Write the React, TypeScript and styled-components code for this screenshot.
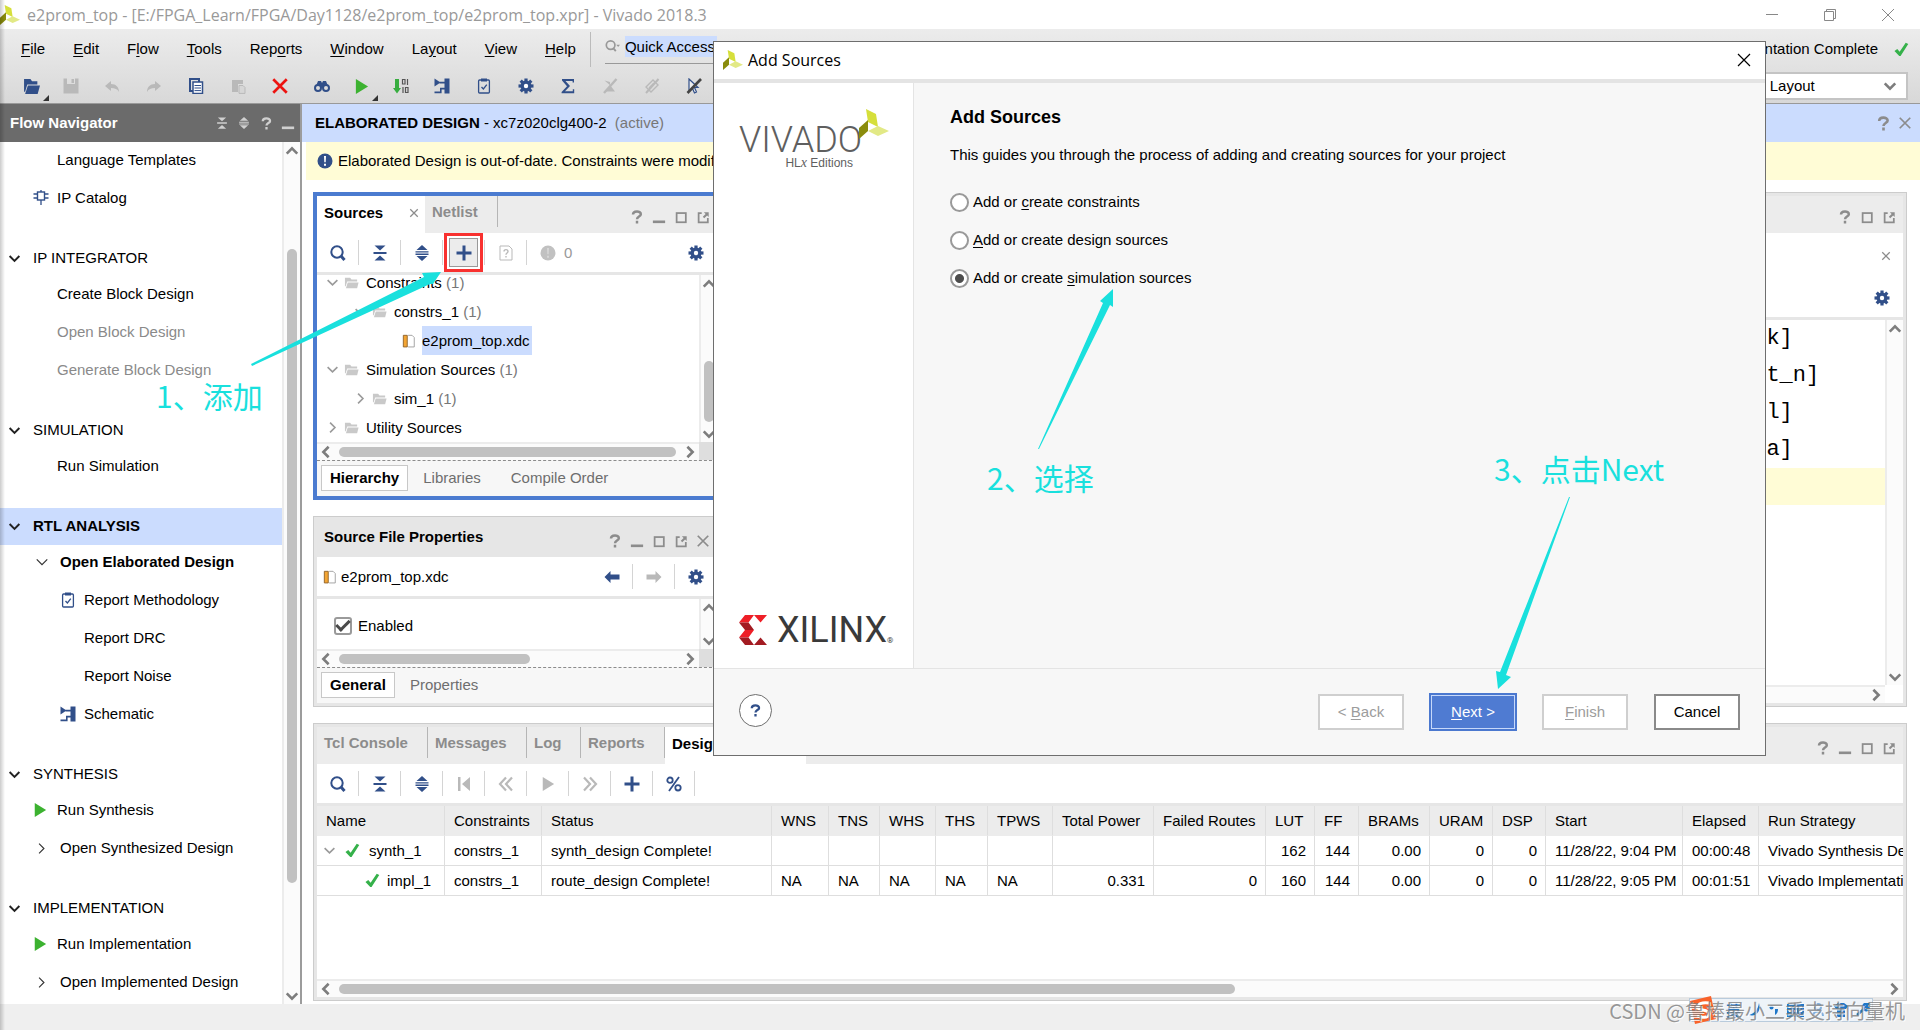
import React from 'react';
import styled, { createGlobalStyle, css } from 'styled-components';

const NAVY = '#314f89';
const GREY = '#8c8c8c';
const PALE = '#b9b9b9';
const GREEN = '#3cb230';
const SELECT_BLUE = '#cbdcfe';
const CYAN = '#19e0dd';

const GlobalStyle = createGlobalStyle`
  * { box-sizing: border-box; }
  body { margin: 0; background: #fff; overflow: hidden; }
  body, button, input, select, table {
    font-family: "Liberation Sans", Arial, sans-serif;
    font-size: 15px;
    line-height: 18px;
    color: #000;
  }
  button, input, select { border: 0; padding: 0; margin: 0; background: none; }
  h1, h2, p, ul { margin: 0; padding: 0; font-size: inherit; }
  ul { list-style: none; }
  svg { display: block; flex: none; }
  u { text-underline-offset: 2px; }
  a { color: inherit; text-decoration: none; }
`;

/* ---------- icons ---------- */

type IconProps = { color?: string; size?: number };

const Svg = ({ size = 16, children }: { size?: number; children: React.ReactNode }) => (
  <svg width={size} height={size} viewBox="0 0 16 16" aria-hidden="true">{children}</svg>
);

const VivadoMark = ({ size = 20 }: IconProps) => (
  <svg width={size} height={size} viewBox="0 0 30 30" aria-hidden="true">
    <path d="M7 0 L17 5 L19 18 L9 13 Z" fill="#d6df3b" />
    <path d="M0 19 L9 11 L9 22 L0 30 Z" fill="#8a8c0c" />
    <path d="M9 22 L19 17 L30 22 L19 27 Z" fill="#e2e986" />
  </svg>
);

const Chevron = ({ dir, color = '#7d7d7d', w = 2, size = 14 }: { dir: 'up' | 'down' | 'left' | 'right'; color?: string; w?: number; size?: number }) => {
  const d = { up: 'M2 11 L8 5 L14 11', down: 'M2 5 L8 11 L14 5', left: 'M11 2 L5 8 L11 14', right: 'M5 2 L11 8 L5 14' }[dir];
  return <Svg size={size}><path d={d} fill="none" stroke={color} strokeWidth={w} /></Svg>;
};

const Search = ({ color = NAVY }: IconProps) => (
  <Svg><circle cx="7" cy="7" r="5.7" fill="none" stroke={color} strokeWidth="2" /><path d="M11 11 L14.5 15" stroke={color} strokeWidth="3" /></Svg>
);
const Collapse = ({ color = NAVY, size }: IconProps) => (
  <Svg size={size}><path d="M2.5 0.5 H13.5 L8 5.5Z M2.5 15.5 H13.5 L8 10.5Z M1.5 7 H14.5 V9 H1.5Z" fill={color} /></Svg>
);
const Expand = ({ color = NAVY, size }: IconProps) => (
  <Svg size={size}><path d="M2.5 5 H13.5 L8 0Z M2.5 11 H13.5 L8 16Z M1.5 6.2 H14.5 V7.6 H1.5Z M1.5 8.6 H14.5 V10 H1.5Z" fill={color} /></Svg>
);
const Plus = () => <Svg><path d="M6.5 0.5 H9.5 V6.5 H15.5 V9.5 H9.5 V15.5 H6.5 V9.5 H0.5 V6.5 H6.5Z" fill={NAVY} /></Svg>;
const DocHelp = () => (
  <Svg><path d="M2 1 H11 L14 4 V15 H2Z" fill="none" stroke={PALE} /><path d="M6 6.5 C6 4 10 4 10 6.5 C10 8 8 8 8 9.7 M8 11 V12.6" fill="none" stroke={PALE} strokeWidth="1.4" /></Svg>
);
const AlertDot = ({ color = '#c1c1c1' }: IconProps) => (
  <Svg><circle cx="8" cy="8" r="7.5" fill={color} /><path d="M7 3 H9 L8.7 9.3 H7.3Z M7 10.8 H9 V12.8 H7Z" fill="#fff" opacity={color === NAVY ? 1 : 0.35} /></Svg>
);
const Gear = () => (
  <Svg>
    <g fill={NAVY}>
      {[0, 45, 90, 135].map((a) => <rect key={a} x="6.4" y="0.5" width="3.2" height="15" transform={`rotate(${a} 8 8)`} />)}
      <circle cx="8" cy="8" r="5.5" />
    </g>
    <circle cx="8" cy="8" r="2.2" fill="#fff" />
  </Svg>
);
const Help = ({ color = GREY, size = 14 }: IconProps) => (
  <Svg size={size}><path d="M3.4 5.2 C3.4 0.6 12.4 0.6 12.4 4.8 C12.4 7.6 8 7.4 8 10.6 M8 12.2 V15.4" fill="none" stroke={color} strokeWidth="2.8" /></Svg>
);
const Minimize = ({ color = GREY }: IconProps) => <Svg size={14}><path d="M1 13.5 H15" stroke={color} strokeWidth="3" /></Svg>;
const Maximize = () => <Svg size={14}><rect x="3" y="3.5" width="10.5" height="10.5" fill="none" stroke={GREY} strokeWidth="2" /></Svg>;
const Popout = () => (
  <Svg size={14}><path d="M6.5 3.5 H3 V14 H13.5 V9" fill="none" stroke={GREY} strokeWidth="2" /><path d="M9 2.5 H14.5 V8 L12.7 6.2 L9.4 9.4 L7.8 7.8 L11 4.5Z" fill={GREY} /></Svg>
);
const Cross = ({ color = GREY, size = 14, w = 2 }: IconProps & { w?: number }) => (
  <Svg size={size}><path d="M2 2 L14 14 M14 2 L2 14" stroke={color} strokeWidth={w} /></Svg>
);
const Play = ({ color = GREEN, size = 14 }: IconProps) => <Svg size={size}><path d="M2 0 L15 8 L2 16Z" fill={color} /></Svg>;
const Check = () => <Svg size={15}><path d="M0.5 9.5 L3.5 7.5 L6 10.5 L12.5 0.8 L15.2 2.2 L7 15 L5.6 15Z" fill="#35b14a" /></Svg>;
const Clipboard = () => (
  <Svg><rect x="2.6" y="2" width="10.8" height="13" rx="1" fill="none" stroke={NAVY} strokeWidth="1.3" /><path d="M5 0.5 H11 V3.5 H5Z" fill={NAVY} /><path d="M5.5 9 L7.4 11 L10.8 6.6" fill="none" stroke={NAVY} strokeWidth="1.3" /></Svg>
);
const Schematic = () => (
  <Svg><path d="M10.5 0.5 H15.5 V15.5 H10.5Z M0.5 0.5 L6.5 4.6 L0.5 8.5Z" fill={NAVY} /><path d="M5.5 4.6 H11 M0.5 14.4 H6.8 V10.6 H11" fill="none" stroke={NAVY} strokeWidth="1.6" /></Svg>
);
const Chip = () => (
  <Svg><rect x="4.5" y="2" width="7" height="8" fill="none" stroke={NAVY} strokeWidth="1.4" /><path d="M8 0 V2 M8 10 V15 M0.5 4 H4 M0.5 8 H4 M12 4 H15.5 M12 8 H15.5" stroke={NAVY} strokeWidth="1.3" /></Svg>
);
const FolderIcon = () => (
  <Svg size={15}><path d="M1 3 H6.5 L8 4.8 H14 V7 H3.4 L1.8 12 H1Z" fill="#c9c9c9" /><path d="M4 8 H15.5 L14 14 H2Z" fill="#c9c9c9" /></Svg>
);
const XdcIcon = () => (
  <Svg size={14}><path d="M1.5 1.5 H6 V14.8 H1.5Z" fill="#f3a533" stroke="#8a5d24" /><path d="M7 1.5 H11.5 L14 4 V14.8 H7" fill="#fff" stroke="#9a9a9a" /></Svg>
);
const OpenIcon = () => (
  <Svg size={17}><path d="M1 1 H7 L8.5 3 H13.5 V6 H4 L2 13 H1Z" fill={NAVY} /><path d="M4.6 7 H16 L13.8 15 H2Z" fill={NAVY} /></Svg>
);
const Save = () => <Svg><path d="M0.5 0.5 H15.5 V15.5 H0.5Z M4 0.5 V6 H12 V0.5Z" fill={PALE} fillRule="evenodd" /><path d="M8.5 1 H11 V5 H8.5Z" fill={PALE} /></Svg>;
const Undo = () => <Svg><path d="M1 8 L7 3 V6 C12 6 15 9 15 14 C13.5 11 11 10 7 10 V13Z" fill={PALE} /></Svg>;
const Redo = () => <Svg><path d="M15 8 L9 3 V6 C4 6 1 9 1 14 C2.5 11 5 10 9 10 V13Z" fill={PALE} /></Svg>;
const CopyIcon = () => <Svg><path d="M2 1 H11 V13 H2Z" fill="none" stroke={NAVY} strokeWidth="2" /><path d="M5 4 H14.5 V15.5 H5Z" fill="#fff" stroke={NAVY} strokeWidth="1.5" /><path d="M6.5 7.5 H13 M6.5 10 H13 M6.5 12.6 H13" stroke={NAVY} /></Svg>;
const Paste = () => <Svg><path d="M2 2 H13 V6 H8 V14 H2Z" fill={PALE} /><path d="M9 7.5 H13 L15 9.5 V15.4 H9Z" fill="#d6d6d6" stroke={PALE} /></Svg>;
const Binoculars = () => (
  <Svg><circle cx="4" cy="10" r="3" fill="none" stroke={NAVY} strokeWidth="2" /><circle cx="12" cy="10" r="3" fill="none" stroke={NAVY} strokeWidth="2" /><path d="M2 8 L4 3 H7 L8 5 L9 3 H12 L14 8 L10 7.5 L9 10 H7 L6 7.5Z" fill={NAVY} /></Svg>
);
const Bits = () => (
  <Svg><path d="M2 1 H6 V10 H8 L4 15.5 L0 10 H2Z" fill="#37ad3f" /><path d="M9.5 1.5 H12 V6 H9.5Z M14.5 1 V7 M10 9 V15 M12.5 9.5 H15 V14.5 H12.5Z" fill="none" stroke="#555" strokeWidth="1.2" /></Svg>
);
const Sigma = () => <Svg><path d="M2 1 H14 V4.5 H12.6 V3 H5.5 L10 8 L5 13.2 H12.8 V11.2 H14.2 V15.2 H1.6 V14 L7 8.2 L2 2.4Z" fill={NAVY} /></Svg>;
const Slashed = ({ color = PALE }: IconProps) => (
  <Svg><path d="M2.5 2.5 L9 8 L3 13.5 H13 L8 7 V4Z" fill={color} /><path d="M14.5 1 L2 15" stroke={color} strokeWidth="2.4" /></Svg>
);
const SlashedProbe = () => (
  <Svg><path d="M2 9 L9 2 L14 7 L7 14Z M5 10 L10 5" fill="none" stroke={PALE} strokeWidth="1.4" /><path d="M14.5 1 L2 15" stroke={PALE} strokeWidth="2" /></Svg>
);
const SlashedCursor = () => (
  <Svg><path d="M3 1 L12 9.5 H8.5 L10.5 14 L8.5 15 L6.5 10.5 L3 13Z" fill="#eee" stroke={NAVY} strokeWidth="1.2" /><path d="M15 1 L1.5 15" stroke="#444" strokeWidth="2.6" /></Svg>
);
const ArrowBlock = ({ flip, color }: { flip?: boolean; color: string }) => (
  <Svg><path d={flip ? 'M15.5 8 L9.5 2 V5.5 H0.5 V10.5 H9.5 V14Z' : 'M0.5 8 L6.5 2 V5.5 H15.5 V10.5 H6.5 V14Z'} fill={color} /></Svg>
);
const SkipStart = () => <Svg><path d="M2 1 H4.5 V15 H2Z M14 1 V15 L6 8Z" fill={PALE} /></Svg>;
const Rewind = () => <Svg><path d="M8 1.5 L2 8 L8 14.5 M14 1.5 L8 8 L14 14.5" fill="none" stroke={PALE} strokeWidth="2.2" /></Svg>;
const FastFwd = () => <Svg><path d="M2 1.5 L8 8 L2 14.5 M8 1.5 L14 8 L8 14.5" fill="none" stroke={PALE} strokeWidth="2.2" /></Svg>;
const Percent = () => <Svg><circle cx="4" cy="4.2" r="2.7" fill="none" stroke={NAVY} strokeWidth="1.8" /><circle cx="12" cy="11.8" r="2.7" fill="none" stroke={NAVY} strokeWidth="1.8" /><path d="M13 1 L3 15" stroke={NAVY} strokeWidth="1.8" /></Svg>;

/* ---------- shared parts ---------- */

const IconButton = styled.button<{ $w?: number; $h?: number }>`
  position: relative;
  display: flex;
  align-items: center;
  justify-content: center;
  flex: none;
  width: ${(p) => p.$w ?? 22}px;
  height: ${(p) => p.$h ?? 22}px;
`;

const BarWrap = styled.div<{ $vertical?: boolean }>`
  display: flex;
  flex: none;
  background: #fbfbfb;
  ${(p) => p.$vertical
    ? css`flex-direction: column; width: 18px; border-left: 2px solid #ececec;`
    : css`flex-direction: row; height: 18px; border-top: 2px solid #ececec;`}
`;
const BarTrack = styled.div<{ $vertical?: boolean }>`
  display: flex;
  flex: 1;
  min-width: 0;
  min-height: 0;
  flex-direction: ${(p) => (p.$vertical ? 'column' : 'row')};
  align-items: center;
`;
const BarSpace = styled.div<{ $grow: number }>`flex: ${(p) => p.$grow} 1 0;`;
const BarThumb = styled.div<{ $grow: number; $vertical?: boolean }>`
  flex: ${(p) => p.$grow} 1 0;
  border-radius: 5px;
  background: #c1c1c1;
  ${(p) => (p.$vertical ? css`width: 10px;` : css`height: 10px;`)}
`;

type ScrollProps = { vertical?: boolean; before?: number; thumb?: number; after?: number };
const ScrollBar = ({ vertical, before = 0, thumb = 0, after = 0 }: ScrollProps) => (
  <BarWrap $vertical={vertical}>
    <IconButton aria-label="Scroll back" $w={vertical ? 16 : 18} $h={vertical ? 18 : 16}>
      <Chevron dir={vertical ? 'up' : 'left'} w={3} />
    </IconButton>
    <BarTrack $vertical={vertical}>
      <BarSpace $grow={before} />
      {thumb > 0 && <BarThumb $grow={thumb} $vertical={vertical} />}
      <BarSpace $grow={after} />
    </BarTrack>
    <IconButton aria-label="Scroll forward" $w={vertical ? 16 : 18} $h={16}>
      <Chevron dir={vertical ? 'down' : 'right'} w={3} />
    </IconButton>
  </BarWrap>
);

/* ---------- window frame ---------- */

const Window = styled.div`
  position: relative;
  display: flex;
  flex-direction: column;
  height: 100vh;
  overflow: hidden;
  &::after {
    content: '';
    position: absolute;
    inset: 0 auto 0 0;
    width: 5px;
    background: linear-gradient(90deg, rgba(0, 0, 0, 0.2), rgba(0, 0, 0, 0));
    pointer-events: none;
  }
`;
const TitleBar = styled.header`
  display: flex;
  align-items: center;
  height: 29px;
  flex: none;
  gap: 7px;
  padding-right: 24px;
  color: #999;
  font-family: "Open Sans", "Noto Sans", sans-serif;
  font-size: 16px;
`;
const TitleText = styled.h1`
  flex: 1;
  font-weight: 400;
  line-height: 24px;
`;
const WindowButtons = styled.div`
  display: flex;
  gap: 42px;
`;
const Chrome = styled.div`
  flex: none;
  height: 75px;
  background: linear-gradient(#ececec, #d8d8d8);
  border-bottom: 1px solid #999;
`;
const MenuRow = styled.div`
  display: flex;
  height: 40px;
  align-items: center;
  padding: 0 11px 0 21px;
`;
const Menus = styled.nav`
  display: flex;
  gap: 28px;
`;
const QuickAccess = styled.label`
  display: flex;
  align-items: center;
  align-self: stretch;
  margin: 3px 0 2px 14px;
  padding-left: 14px;
  border-left: 1px solid #bbb;
`;
const QuickBox = styled.span`
  display: flex;
  align-items: center;
  gap: 5px;
  height: 29px;
  border-bottom: 1px solid #999;
  padding-bottom: 6px;
`;
const QuickInput = styled.input`
  width: 160px;
  height: 21px;
  background: linear-gradient(90deg, ${SELECT_BLUE} 92px, transparent 92px);
  &::placeholder { color: #000; opacity: 1; }
`;
const RunState = styled.div`
  display: flex;
  align-items: center;
  gap: 16px;
  margin-left: auto;
`;
const ToolRow = styled.div`
  display: flex;
  align-items: center;
  height: 34px;
  padding: 0 12px 0 11px;
`;
const Corner = styled.span`
  position: absolute;
  right: 2px;
  bottom: -4px;
  border: 3px solid #333;
  border-top-color: transparent;
  border-left-color: transparent;
`;
const LayoutPicker = styled.span`
  position: relative;
  display: flex;
  align-items: center;
  margin-left: auto;
  margin-top: -1px;
  width: 204px;
  height: 28px;
  border: 2px solid #c4c4c4;
  background: #fff;
  > svg { position: absolute; right: 9px; pointer-events: none; }
`;
const LayoutSelect = styled.select`
  appearance: none;
  width: 100%;
  height: 100%;
  padding-left: 12px;
`;

const Body = styled.div`
  display: flex;
  flex: 1;
  min-height: 0;
`;
const StatusBar = styled.footer`
  flex: none;
  height: 26px;
  background: #efefef;
`;

/* ---------- flow navigator ---------- */

const Nav = styled.aside`
  display: flex;
  flex-direction: column;
  flex: none;
  width: 302px;
  border-right: 2px solid #9c9c9c;
`;
const NavHead = styled.div`
  display: flex;
  align-items: center;
  height: 38px;
  flex: none;
  padding: 0 1px 0 10px;
  background: #6b6b6b;
  color: #fff;
`;
const NavTitle = styled.h2`flex: 1;`;
const NavScroll = styled.div`
  display: flex;
  flex: 1;
  min-height: 0;
`;
const NavList = styled.div`
  flex: 1;
  padding-top: 1px;
  overflow: hidden;
`;
const Section = styled.section`
  padding-bottom: 21px;
`;
const SectionHead = styled.h2<{ $active?: boolean }>`
  display: flex;
  align-items: center;
  gap: 12px;
  height: 37px;
  padding: 0 0 1px 8px;
  font-weight: ${(p) => (p.$active ? 700 : 400)};
  background: ${(p) => (p.$active ? SELECT_BLUE : 'transparent')};
`;
const NavItem = styled.a<{ $indent: number; $bold?: boolean; $dim?: boolean }>`
  display: flex;
  align-items: center;
  height: 38px;
  padding: 0 0 4px ${(p) => p.$indent}px;
  font-weight: ${(p) => (p.$bold ? 700 : 400)};
  color: ${(p) => (p.$dim ? '#8a8a8a' : '#000')};
`;
const Glyph = styled.span<{ $w: number }>`
  display: flex;
  width: ${(p) => p.$w}px;
  flex: none;
`;

type NavEntry = { text: string; icon?: React.ReactNode; level?: 0 | 1 | 2; bold?: boolean; dim?: boolean };
const levels = { 0: [33, 24], 1: [35, 25], 2: [60, 24] } as const;

const NavEntryRow = ({ text, icon, level = 0, bold, dim }: NavEntry) => (
  <NavItem href="#" $indent={levels[level][0]} $bold={bold} $dim={dim}>
    <Glyph $w={levels[level][1]}>{icon}</Glyph>
    {text}
  </NavItem>
);

const navSections: { title: string; active?: boolean; items: NavEntry[] }[] = [
  { title: 'IP INTEGRATOR', items: [{ text: 'Create Block Design' }, { text: 'Open Block Design', dim: true }, { text: 'Generate Block Design', dim: true }] },
  { title: 'SIMULATION', items: [{ text: 'Run Simulation' }] },
  {
    title: 'RTL ANALYSIS',
    active: true,
    items: [
      { text: 'Open Elaborated Design', level: 1, bold: true, icon: <Chevron dir="down" color="#333" w={1.4} /> },
      { text: 'Report Methodology', level: 2, icon: <Clipboard /> },
      { text: 'Report DRC', level: 2 },
      { text: 'Report Noise', level: 2 },
      { text: 'Schematic', level: 2, icon: <Schematic /> },
    ],
  },
  { title: 'SYNTHESIS', items: [{ text: 'Run Synthesis', icon: <Play /> }, { text: 'Open Synthesized Design', level: 1, icon: <Chevron dir="right" color="#333" w={1.4} size={13} /> }] },
  { title: 'IMPLEMENTATION', items: [{ text: 'Run Implementation', icon: <Play /> }, { text: 'Open Implemented Design', level: 1, icon: <Chevron dir="right" color="#333" w={1.4} size={13} /> }] },
];

const FlowNavigator = () => (
  <Nav>
    <NavHead>
      <NavTitle>Flow Navigator</NavTitle>
      <IconButton aria-label="Collapse all"><Collapse color="#d0d0d0" size={12} /></IconButton>
      <IconButton aria-label="Expand all"><Expand color="#d0d0d0" size={12} /></IconButton>
      <IconButton aria-label="Help"><Help color="#d0d0d0" size={13} /></IconButton>
      <IconButton aria-label="Minimize"><Minimize color="#d0d0d0" /></IconButton>
    </NavHead>
    <NavScroll>
      <NavList>
        <Section>
          <NavEntryRow text="Language Templates" />
          <NavEntryRow text="IP Catalog" icon={<Chip />} />
        </Section>
        {navSections.map((s) => (
          <Section key={s.title}>
            <SectionHead $active={s.active}><Chevron dir="down" color="#222" w={2.4} size={13} />{s.title}</SectionHead>
            {s.items.map((i) => <NavEntryRow key={i.text} {...i} />)}
          </Section>
        ))}
      </NavList>
      <ScrollBar vertical before={89} thumb={634} after={105} />
    </NavScroll>
  </Nav>
);

/* ---------- main area ---------- */

const Main = styled.main`
  display: flex;
  flex-direction: column;
  flex: 1;
  min-width: 0;
`;
const DesignBar = styled.div`
  display: flex;
  align-items: center;
  flex: none;
  height: 38px;
  padding: 0 4px 0 13px;
  background: ${SELECT_BLUE};
`;
const DesignTitle = styled.h2`
  flex: 1;
  font-weight: 400;
  white-space: pre;
`;
const Muted = styled.span`color: #777;`;
const Notice = styled.p`
  display: flex;
  align-items: center;
  flex: none;
  gap: 5px;
  height: 38px;
  margin-left: 4px;
  padding-left: 11px;
  background: #fffcd6;
`;
const Workspace = styled.div`
  display: flex;
  flex-direction: column;
  flex: 1;
  gap: 16px;
  min-height: 0;
  padding: 12px 13px 3px 11px;
`;
const TopPanels = styled.div`
  display: grid;
  grid-template-columns: 408px 1fr;
  gap: 16px;
  flex: none;
`;
const LeftColumn = styled.div`
  display: flex;
  flex-direction: column;
  gap: 16px;
`;
const Panel = styled.section<{ $focus?: boolean; $grow?: boolean }>`
  display: flex;
  flex-direction: column;
  min-width: 0;
  ${(p) => p.$grow && css`flex: 1; min-height: 0;`}
  ${(p) => p.$focus
    ? css`border: 4px solid #4b7bd0;`
    : css`border: 1px solid #ccc; box-shadow: inset 0 0 0 3px #e6e6e6; padding: 3px;`}
  background: #fff;
`;
const PanelHead = styled.div<{ $dark?: boolean }>`
  display: flex;
  align-items: flex-start;
  flex: none;
  height: 37px;
  background: ${(p) => (p.$dark ? '#e6e6e6' : '#ececec')};
`;
const PanelTitle = styled.h2`
  padding: 8px 7px;
`;
const PanelTools = styled.div`
  display: flex;
  margin-left: auto;
  padding: 10px 3px 0 0;
`;
const Tab = styled.button<{ $active?: boolean; $w: number }>`
  display: flex;
  align-items: center;
  justify-content: space-between;
  width: ${(p) => p.$w}px;
  height: ${(p) => (p.$active ? 37 : 31)}px;
  padding: 0 6px ${(p) => (p.$active ? 3 : 0)}px 7px;
  font-weight: 700;
  color: ${(p) => (p.$active ? '#000' : GREY)};
  background: ${(p) => (p.$active ? '#fff' : 'transparent')};
  border-right: ${(p) => (p.$active ? 0 : 1)}px solid #b5b5b5;
`;
const Toolbar = styled.div`
  display: flex;
  align-items: center;
  flex: none;
  height: 42px;
  border-bottom: 3px solid #e6e6e6;
`;
const ToolCell = styled.div<{ $last?: boolean }>`
  display: flex;
  align-items: center;
  justify-content: center;
  width: 42px;
  height: 25px;
  border-right: ${(p) => (p.$last ? 0 : 1)}px solid #d4d4d4;
`;
const Push = styled.span`margin-left: auto;`;
const AddButton = styled(IconButton)`
  width: 29px;
  height: 29px;
  background: #ececec;
  border: 1px solid #999;
  outline: 3px solid #f8312f;
  outline-offset: 2px;
`;
const CountCell = styled.div`
  display: flex;
  align-items: center;
  gap: 8px;
  padding-left: 13px;
  color: #999;
`;
const ScrollArea = styled.div`
  display: grid;
  grid-template-columns: minmax(0, 1fr) 18px;
  grid-template-rows: minmax(0, 1fr) 18px;
`;
const ScrollCorner = styled.div<{ $plain?: boolean }>`
  background: ${(p) => (p.$plain ? '#fff' : '#dedede')};
`;
const Tree = styled.ul`
  overflow: hidden;
`;
const TreeRow = styled.li<{ $level: number }>`
  display: flex;
  align-items: center;
  height: 29px;
  padding-left: ${(p) => 9 + p.$level * 28}px;
  white-space: pre;
  &:first-child { height: 22px; padding-bottom: 7px; }
`;
const TreeLabel = styled.span<{ $selected?: boolean }>`
  line-height: 29px;
  padding-right: 2px;
  background: ${(p) => (p.$selected ? SELECT_BLUE : 'transparent')};
`;
const FootTabs = styled.div`
  display: flex;
  align-items: center;
  flex: none;
  height: 36px;
  padding: 0 4px 1px;
  border-top: 1px dashed #8c8c8c;
  background: #f7f7f7;
`;
const FootTab = styled.button<{ $active?: boolean }>`
  height: 26px;
  padding: 0 8px;
  font-weight: ${(p) => (p.$active ? 700 : 400)};
  color: ${(p) => (p.$active ? '#000' : '#6e6e6e')};
  border: 1px solid ${(p) => (p.$active ? '#c8c8c8' : 'transparent')};
  background: ${(p) => (p.$active ? '#fff' : 'transparent')};
  margin-right: ${(p) => (p.$active ? 6 : 12)}px;
`;

const tree: { level: number; text: string; count?: string; open?: boolean; file?: boolean }[] = [
  { level: 0, text: 'Constraints', count: ' (1)', open: true },
  { level: 1, text: 'constrs_1', count: ' (1)', open: true },
  { level: 2, text: 'e2prom_top.xdc', file: true },
  { level: 0, text: 'Simulation Sources', count: ' (1)', open: true },
  { level: 1, text: 'sim_1', count: ' (1)' },
  { level: 0, text: 'Utility Sources' },
];

const SourcesPanel = () => (
  <Panel $focus>
    <PanelHead>
      <Tab $active $w={108}>Sources<Cross size={10} w={2} /></Tab>
      <Tab $w={73}>Netlist</Tab>
      <PanelTools>
        <IconButton aria-label="Help"><Help /></IconButton>
        <IconButton aria-label="Minimize"><Minimize /></IconButton>
        <IconButton aria-label="Maximize"><Maximize /></IconButton>
        <IconButton aria-label="Float"><Popout /></IconButton>
      </PanelTools>
    </PanelHead>
    <Toolbar>
      <ToolCell><IconButton aria-label="Search"><Search /></IconButton></ToolCell>
      <ToolCell><IconButton aria-label="Collapse all"><Collapse /></IconButton></ToolCell>
      <ToolCell><IconButton aria-label="Expand all"><Expand /></IconButton></ToolCell>
      <ToolCell><AddButton aria-label="Add sources"><Plus /></AddButton></ToolCell>
      <ToolCell><IconButton aria-label="Missing files"><DocHelp /></IconButton></ToolCell>
      <CountCell><AlertDot />0</CountCell>
      <Push />
      <ToolCell $last><IconButton aria-label="Settings"><Gear /></IconButton></ToolCell>
    </Toolbar>
    <ScrollArea>
      <Tree>
        {tree.map((n) => (
          <TreeRow key={n.text} $level={n.level}>
            <Glyph $w={n.file ? 20 : 18}>
              {n.file ? null : <Chevron dir={n.open ? 'down' : 'right'} color="#9a9a9a" size={13} />}
            </Glyph>
            <Glyph $w={n.file ? 20 : 22}>{n.file ? <XdcIcon /> : <FolderIcon />}</Glyph>
            <TreeLabel $selected={n.file}>{n.text}{n.count && <Muted>{n.count}</Muted>}</TreeLabel>
          </TreeRow>
        ))}
      </Tree>
      <ScrollBar vertical before={67} thumb={61} after={4} />
      <ScrollBar before={4} thumb={337} after={5} />
      <ScrollCorner />
    </ScrollArea>
    <FootTabs>
      <FootTab $active>Hierarchy</FootTab>
      <FootTab>Libraries</FootTab>
      <FootTab>Compile Order</FootTab>
    </FootTabs>
  </Panel>
);

const FileName = styled.span`
  display: flex;
  align-items: center;
  gap: 4px;
  padding-left: 6px;
`;
const EnabledLabel = styled.label`
  display: flex;
  align-items: center;
  gap: 6px;
  height: 50px;
  padding: 4px 0 0 17px;
`;
const CheckBox = styled.input`
  appearance: none;
  width: 18px;
  height: 18px;
  border: 2px solid #9a9a9a;
  border-radius: 3px;
  background: #fff;
  display: grid;
  place-items: center;
  &:checked::after {
    content: '';
    width: 11px;
    height: 5px;
    border: solid #4a4a4a;
    border-width: 0 0 3px 3px;
    transform: translateY(-2px) rotate(-45deg);
  }
`;

const PropertiesPanel = () => (
  <Panel>
    <PanelHead $dark>
      <PanelTitle>Source File Properties</PanelTitle>
      <PanelTools>
        <IconButton aria-label="Help"><Help /></IconButton>
        <IconButton aria-label="Minimize"><Minimize /></IconButton>
        <IconButton aria-label="Maximize"><Maximize /></IconButton>
        <IconButton aria-label="Float"><Popout /></IconButton>
        <IconButton aria-label="Close"><Cross /></IconButton>
      </PanelTools>
    </PanelHead>
    <Toolbar>
      <FileName><XdcIcon />e2prom_top.xdc</FileName>
      <Push />
      <ToolCell><IconButton aria-label="Back"><ArrowBlock color={NAVY} /></IconButton></ToolCell>
      <ToolCell><IconButton aria-label="Forward"><ArrowBlock flip color={PALE} /></IconButton></ToolCell>
      <ToolCell $last><IconButton aria-label="Settings"><Gear /></IconButton></ToolCell>
    </Toolbar>
    <ScrollArea>
      <EnabledLabel><CheckBox type="checkbox" defaultChecked />Enabled</EnabledLabel>
      <ScrollBar vertical />
      <ScrollBar before={4} thumb={191} after={151} />
      <ScrollCorner />
    </ScrollArea>
    <FootTabs>
      <FootTab $active>General</FootTab>
      <FootTab>Properties</FootTab>
    </FootTabs>
  </Panel>
);

const EditorTabs = styled.div`
  display: flex;
  align-items: center;
  justify-content: flex-end;
  height: 45px;
  padding: 1px 11px 0 0;
`;
const EditorArea = styled(ScrollArea)`
  flex: 1;
  min-height: 0;
`;
const CodeView = styled.div`
  overflow: hidden;
`;
const CodeLine = styled.div<{ $current?: boolean }>`
  display: grid;
  grid-template-columns: 1fr 145px;
  height: 37px;
  font: 22px/37px "Liberation Mono", monospace;
  background: ${(p) => (p.$current ? '#fffcd6' : 'transparent')};
`;

const EditorPanel = () => (
  <Panel>
    <PanelHead>
      <PanelTools>
        <IconButton aria-label="Help"><Help /></IconButton>
        <IconButton aria-label="Maximize"><Maximize /></IconButton>
        <IconButton aria-label="Float"><Popout /></IconButton>
      </PanelTools>
    </PanelHead>
    <EditorTabs><IconButton aria-label="Close file" $w={12}><Cross size={10} /></IconButton></EditorTabs>
    <Toolbar>
      <Push />
      <ToolCell $last><IconButton aria-label="Settings"><Gear /></IconButton></ToolCell>
    </Toolbar>
    <EditorArea>
      <CodeView>
        {['clk]', 'rst_n]', 'scl]', 'sda]'].map((t) => <CodeLine key={t}><span /><span>{t}</span></CodeLine>)}
        <CodeLine $current />
      </CodeView>
      <ScrollBar vertical />
      <ScrollBar />
      <ScrollCorner $plain />
    </EditorArea>
  </Panel>
);

/* ---------- design runs ---------- */

const TableWrap = styled.div`
  flex: 1;
  min-height: 0;
  overflow: hidden;
`;
const RunsTable = styled.table`
  width: 100%;
  table-layout: fixed;
  border-collapse: separate;
  border-spacing: 0;
`;
const Cell = styled.td<{ $right?: boolean }>`
  height: 30px;
  padding: 0 8px 0 9px;
  overflow: hidden;
  white-space: nowrap;
  text-align: ${(p) => (p.$right ? 'right' : 'left')};
  border-right: 1px solid #dedede;
  border-bottom: 1px solid #dedede;
  &:last-child { border-right: 0; padding-right: 0; }
`;
const HeadCell = styled(Cell)`
  font-weight: 400;
  background: #ececec;
  border-bottom-color: #ececec;
`;
const RunName = styled.span<{ $child?: boolean }>`
  display: flex;
  align-items: center;
  gap: ${(p) => (p.$child ? 7 : 9)}px;
  padding-left: ${(p) => (p.$child ? 42 : 0)}px;
  margin: 0 -8px 0 -3px;
`;

const columns: [string, number?][] = [
  ['Name', 128], ['Constraints', 97], ['Status', 230], ['WNS', 57], ['TNS', 51], ['WHS', 56], ['THS', 52], ['TPWS', 65],
  ['Total Power', 101], ['Failed Routes', 112], ['LUT', 49], ['FF', 44], ['BRAMs', 71], ['URAM', 63], ['DSP', 53],
  ['Start', 137], ['Elapsed', 76], ['Run Strategy'],
];
const runs = [
  ['synth_1', 'constrs_1', 'synth_design Complete!', '', '', '', '', '', '', '', '162', '144', '0.00', '0', '0', '11/28/22, 9:04 PM', '00:00:48', 'Vivado Synthesis Defaults'],
  ['impl_1', 'constrs_1', 'route_design Complete!', 'NA', 'NA', 'NA', 'NA', 'NA', '0.331', '0', '160', '144', '0.00', '0', '0', '11/28/22, 9:05 PM', '00:01:51', 'Vivado Implementation Defaults'],
];

const RunsPanel = () => (
  <Panel $grow>
    <PanelHead>
      <Tab $w={111}>Tcl Console</Tab>
      <Tab $w={99}>Messages</Tab>
      <Tab $w={54}>Log</Tab>
      <Tab $w={84}>Reports</Tab>
      <Tab $active $w={141}>Design Runs</Tab>
      <PanelTools>
        <IconButton aria-label="Help"><Help /></IconButton>
        <IconButton aria-label="Minimize"><Minimize /></IconButton>
        <IconButton aria-label="Maximize"><Maximize /></IconButton>
        <IconButton aria-label="Float"><Popout /></IconButton>
      </PanelTools>
    </PanelHead>
    <Toolbar>
      <ToolCell><IconButton aria-label="Search"><Search /></IconButton></ToolCell>
      <ToolCell><IconButton aria-label="Collapse all"><Collapse /></IconButton></ToolCell>
      <ToolCell><IconButton aria-label="Expand all"><Expand /></IconButton></ToolCell>
      <ToolCell><IconButton aria-label="First"><SkipStart /></IconButton></ToolCell>
      <ToolCell><IconButton aria-label="Previous"><Rewind /></IconButton></ToolCell>
      <ToolCell><IconButton aria-label="Run"><Play color={PALE} /></IconButton></ToolCell>
      <ToolCell><IconButton aria-label="Next"><FastFwd /></IconButton></ToolCell>
      <ToolCell><IconButton aria-label="Add run"><Plus /></IconButton></ToolCell>
      <ToolCell><IconButton aria-label="Percentage"><Percent /></IconButton></ToolCell>
    </Toolbar>
    <TableWrap>
      <RunsTable>
        <colgroup>{columns.map(([n, w]) => <col key={n} width={w} />)}</colgroup>
        <thead><tr>{columns.map(([n]) => <HeadCell as="th" key={n}>{n}</HeadCell>)}</tr></thead>
        <tbody>
          {runs.map((r, i) => (
            <tr key={r[0]}>
              {r.map((v, c) => (
                <Cell key={columns[c][0]} $right={c > 7 && c < 15}>
                  {c === 0 ? <RunName $child={i === 1}>{i === 0 && <Chevron dir="down" color="#9a9a9a" size={13} />}<Check />{v}</RunName> : v}
                </Cell>
              ))}
            </tr>
          ))}
        </tbody>
      </RunsTable>
    </TableWrap>
    <ScrollBar before={4} thumb={896} after={650} />
  </Panel>
);

/* ---------- dialog ---------- */

const Dialog = styled.div`
  position: absolute;
  left: 713px;
  top: 41px;
  width: 1053px;
  height: 715px;
  display: flex;
  flex-direction: column;
  border: 1px solid #6e6e6e;
  background: #f7f7f7;
`;
const DialogTitle = styled.div`
  display: flex;
  align-items: center;
  gap: 5px;
  flex: none;
  height: 41px;
  padding: 0 10px 1px 9px;
  border-bottom: 4px solid #e4e4e4;
  background: #fff;
  font: 16px/24px "Open Sans", "Noto Sans", sans-serif;
  > span { flex: 1; }
`;
const DialogBody = styled.div`
  display: flex;
  flex: 1;
`;
const Brand = styled.div`
  display: flex;
  flex-direction: column;
  justify-content: space-between;
  width: 200px;
  padding: 26px 20px 20px 25px;
  border-right: 1px solid #e4e4e4;
  background: #fff;
`;
const VivadoLogo = styled.div`
  display: grid;
  grid-template-columns: 117px 30px;
  column-gap: 3px;
  color: #5f5f5f;
`;
const VivadoWord = styled.span`
  font: 300 36px/38px Roboto, sans-serif;
  padding-top: 12px;
`;
const Editions = styled.span`
  font: 12px/14px "Liberation Sans", sans-serif;
  text-align: right;
  white-space: nowrap;
  padding-right: 3px;
  margin-top: -3px;
  i { font-family: "Liberation Serif", serif; font-size: 14px; }
`;
const XilinxLogo = styled.div`
  display: flex;
  align-items: center;
  gap: 10px;
  color: #3a3a3a;
  font: 36px/38px Roboto, sans-serif;
  height: 38px;
  margin-bottom: -1px;
  small { font-size: 8px; line-height: 8px; align-self: flex-end; margin: 0 0 4px -10px; }
`;
const Form = styled.form`
  display: flex;
  flex-direction: column;
  flex: 1;
  padding: 24px 36px;
`;
const FormTitle = styled.h2`
  font-size: 18px;
  line-height: 20px;
`;
const Lead = styled.p`
  margin: 19px 0;
`;
const RadioLabel = styled.label`
  display: flex;
  align-items: center;
  gap: 4px;
  height: 38px;
  > span { white-space: pre; }
`;
const Radio = styled.input`
  appearance: none;
  width: 19px;
  height: 19px;
  border: 2px solid #999;
  border-radius: 50%;
  background: #fff;
  &:checked { background: radial-gradient(circle, #4d4d4d 4px, #fff 5px); }
`;
const DialogFoot = styled.div`
  display: flex;
  align-items: flex-start;
  flex: none;
  gap: 26px;
  height: 87px;
  padding: 25px 25px 0;
  border-top: 1px solid #e4e4e4;
`;
const HelpButton = styled(IconButton)`
  width: 33px;
  height: 33px;
  margin-right: auto;
  border: 1px solid #6e6e6e;
  border-radius: 50%;
  background: #fff;
`;
const DialogButton = styled.button<{ $kind: 'off' | 'primary' | 'plain' }>`
  width: 86px;
  height: 36px;
  background: #fff;
  border: 2px solid ${(p) => (p.$kind === 'off' ? '#cfcfcf' : '#8a8a8a')};
  color: ${(p) => (p.$kind === 'off' ? '#9c9c9c' : '#000')};
  ${(p) => p.$kind === 'primary' && css`
    background: #4f7bd2;
    color: #fff;
    border: 2px solid #c6d8fa;
    outline: 2px solid #4b78cf;
    outline-offset: -1px;
  `}
`;

const AddSourcesDialog = () => (
  <Dialog role="dialog" aria-labelledby="dialog-title">
    <DialogTitle>
      <VivadoMark />
      <span id="dialog-title">Add Sources</span>
      <IconButton aria-label="Close dialog"><Cross color="#000" size={16} w={1.2} /></IconButton>
    </DialogTitle>
    <DialogBody>
      <Brand>
        <VivadoLogo>
          <VivadoWord>VIVADO</VivadoWord>
          <VivadoMark size={30} />
          <Editions>HL<i>x</i> Editions</Editions>
        </VivadoLogo>
        <XilinxLogo>
          <svg width="28" height="30" viewBox="0 0 28 30" aria-hidden="true">
            <path d="M6 0 H15 L9.5 7.5 H0Z M6 15 H15 L9.5 22.5 H0Z M15 0 H28 L21.5 7.5Z" fill="#ee1f27" />
            <path d="M0 7.5 H9.5 L15 15 H6Z M0 22.5 H9.5 L15 30 H6Z M15 30 H28 L21.5 22.5Z" fill="#a31b22" />
          </svg>
          XILINX<small>®</small>
        </XilinxLogo>
      </Brand>
      <Form>
        <FormTitle>Add Sources</FormTitle>
        <Lead>This guides you through the process of adding and creating sources for your project</Lead>
        <RadioLabel><Radio type="radio" name="kind" /><span>Add or <u>c</u>reate constraints</span></RadioLabel>
        <RadioLabel><Radio type="radio" name="kind" /><span><u>A</u>dd or create design sources</span></RadioLabel>
        <RadioLabel><Radio type="radio" name="kind" defaultChecked /><span>Add or create <u>s</u>imulation sources</span></RadioLabel>
      </Form>
    </DialogBody>
    <DialogFoot>
      <HelpButton aria-label="Help"><Help color={NAVY} size={13} /></HelpButton>
      <DialogButton $kind="off">&lt; <u>B</u>ack</DialogButton>
      <DialogButton $kind="primary"><u>N</u>ext &gt;</DialogButton>
      <DialogButton $kind="off"><u>F</u>inish</DialogButton>
      <DialogButton $kind="plain">Cancel</DialogButton>
    </DialogFoot>
  </Dialog>
);

/* ---------- annotations over the window ---------- */

const Arrows = styled.svg`
  position: absolute;
  left: 0;
  top: 0;
  pointer-events: none;
`;
const Note = styled.div<{ $x: number; $y: number }>`
  position: absolute;
  left: ${(p) => p.$x}px;
  top: ${(p) => p.$y}px;
  color: ${CYAN};
  font: 30px/36px "Noto Sans CJK SC", sans-serif;
  white-space: nowrap;
`;
const InputBar = styled.div`
  position: absolute;
  right: 47px;
  bottom: 8px;
  display: flex;
  align-items: center;
  gap: 8px;
  width: 184px;
  height: 24px;
  border: 1px solid #b9cbdc;
  background: #eef3f8;
  color: #1f77c9;
  font: 700 15px/20px "Noto Sans CJK SC", sans-serif;
`;
const Watermark = styled.div`
  position: absolute;
  right: 15px;
  bottom: 5px;
  color: rgba(125, 125, 125, 0.8);
  font: 20px/28px "Noto Sans CJK SC", sans-serif;
  text-shadow: 1px 1px 0 rgba(255, 255, 255, 0.8);
  white-space: nowrap;
`;

const InputMethod = () => (
  <InputBar>
    <svg width="28" height="28" viewBox="0 0 28 28" aria-hidden="true">
      <path d="M0 5 L21 0 L26 23 L5 28Z" fill="#f9622a" />
      <path d="M19 7 C12 6 7 8 8 12 C9 15 19 13 19 18 C19 22 11 22 7 20" fill="none" stroke="#fff" strokeWidth="3" />
    </svg>
    英
    <svg width="12" height="14" viewBox="0 0 12 14"><path d="M10 0 C12 8 8 14 0 12 C6 10 9 6 10 0Z" fill="#1f77c9" /></svg>
    <svg width="10" height="10" viewBox="0 0 10 10"><circle cx="2.5" cy="2.5" r="2" fill="#1f77c9" /><path d="M6 4 H9 C9 7 8 9 6 10Z" fill="#1f77c9" /></svg>
    <svg width="17" height="13" viewBox="0 0 17 13"><path d="M0 0 H17 V13 H0Z M2 2 V4 H5 V2Z M7 2 V4 H10 V2Z M12 2 V4 H15 V2Z M2 6 V8 H5 V6Z M7 6 V8 H10 V6Z M12 6 V8 H15 V6Z M4 10 V11 H13 V10Z" fill="#1f77c9" fillRule="evenodd" /></svg>
    <svg width="14" height="14" viewBox="0 0 14 14"><circle cx="6" cy="4" r="3" fill="none" stroke="#7fb0de" strokeWidth="2" /><path d="M1 13 C1 7 11 7 11 13" fill="none" stroke="#7fb0de" strokeWidth="2" /></svg>
    <svg width="14" height="14" viewBox="0 0 14 14"><path d="M0 3 L4 0 H10 L14 3 L12 6 H11 V14 H3 V6 H2Z" fill="#1f77c9" /></svg>
    <svg width="14" height="14" viewBox="0 0 14 14"><path d="M1 12 L8 6 M8 6 C6 2 9 0 12 1 L10 4 L13 5 C12 8 9 8 8 6" fill="none" stroke="#1f77c9" strokeWidth="2.4" /></svg>
  </InputBar>
);

/* ---------- app ---------- */

const menus: [string, string, string][] = [
  ['', 'F', 'ile'], ['', 'E', 'dit'], ['F', 'l', 'ow'], ['', 'T', 'ools'], ['Rep', 'o', 'rts'], ['', 'W', 'indow'], ['La', 'y', 'out'], ['', 'V', 'iew'], ['', 'H', 'elp'],
];

const tools: [string, React.ReactNode, number?, boolean?][] = [
  ['Open', <OpenIcon />, 40, true], ['Save', <Save />, 40], ['Undo', <Undo />], ['Redo', <Redo />], ['Copy', <CopyIcon />], ['Paste', <Paste />],
  ['Delete', <Cross color="#ec1310" size={18} w={2.4} />], ['Find', <Binoculars />], ['Run', <Play size={15} />, 37, true], ['Generate bitstream', <Bits />, 41],
  ['Schematic', <Schematic />], ['Report', <Clipboard />], ['Settings', <Gear />], ['Summary', <Sigma />], ['Timing off', <Slashed />], ['Probe off', <SlashedProbe />], ['Selection off', <SlashedCursor />],
];

export default function App() {
  return (
    <Window>
      <GlobalStyle />
      <TitleBar>
        <VivadoMark size={20} />
        <TitleText>e2prom_top - [E:/FPGA_Learn/FPGA/Day1128/e2prom_top/e2prom_top.xpr] - Vivado 2018.3</TitleText>
        <WindowButtons>
          <IconButton aria-label="Minimize window" $w={16}><Svg><path d="M2 7.5 H14" stroke="#888" /></Svg></IconButton>
          <IconButton aria-label="Restore window" $w={16}><Svg><path d="M2.5 4.5 H11.5 V13.5 H2.5Z M4.5 4.5 V2.5 H13.5 V11.5 H11.5" fill="none" stroke="#888" /></Svg></IconButton>
          <IconButton aria-label="Close window" $w={16}><Cross size={16} w={1} color="#888" /></IconButton>
        </WindowButtons>
      </TitleBar>
      <Chrome>
        <MenuRow>
          <Menus>
            {menus.map(([a, k, b]) => <a href="#" key={k + b}>{a}<u>{k}</u>{b}</a>)}
          </Menus>
          <QuickAccess>
            <QuickBox>
              <Svg size={15}><circle cx="6" cy="6.5" r="4.6" fill="none" stroke="#999" strokeWidth="1.8" /><path d="M9 10 L11.5 13" stroke="#999" strokeWidth="2" /><path d="M12 6 H16 L14 8.5Z" fill="#999" /></Svg>
              <QuickInput aria-label="Quick Access" placeholder="Quick Access" />
            </QuickBox>
          </QuickAccess>
          <RunState>Implementation Complete<Check /></RunState>
        </MenuRow>
        <ToolRow>
          {tools.map(([name, icon, w, menu]) => (
            <IconButton key={name} aria-label={name} $w={w ?? 42}>{icon}{menu && <Corner />}</IconButton>
          ))}
          <LayoutPicker>
            <LayoutSelect aria-label="Layout"><option>Default Layout</option></LayoutSelect>
            <Chevron dir="down" w={3} />
          </LayoutPicker>
        </ToolRow>
      </Chrome>
      <Body>
        <FlowNavigator />
        <Main>
          <DesignBar>
            <DesignTitle><b>ELABORATED DESIGN</b> - xc7z020clg400-2  <Muted>(active)</Muted></DesignTitle>
            <IconButton aria-label="Help"><Help size={15} /></IconButton>
            <IconButton aria-label="Close design"><Cross /></IconButton>
          </DesignBar>
          <Notice><AlertDot color={NAVY} />Elaborated Design is out-of-date. Constraints were modified.</Notice>
          <Workspace>
            <TopPanels>
              <LeftColumn>
                <SourcesPanel />
                <PropertiesPanel />
              </LeftColumn>
              <EditorPanel />
            </TopPanels>
            <RunsPanel />
          </Workspace>
        </Main>
      </Body>
      <StatusBar />
      <AddSourcesDialog />
      <InputMethod />
      <Watermark>CSDN @鲁棒最小二乘支持向量机</Watermark>
      <Arrows width="1920" height="1030" viewBox="0 0 1920 1030" fill={CYAN} aria-hidden="true">
        <path d="M251 364 L424 277 L422 273 L441 272 L433 284 L430 284 L252 366Z" />
        <path d="M1038 449 L1103 303 L1100 301 L1113 289 L1113 307 L1110 305 L1039 449Z" />
        <path d="M1569 497 L1500 672 L1496 671 L1498 689 L1511 677 L1506 675 L1570 497Z" />
      </Arrows>
      <Note $x={156} $y={377}>1、添加</Note>
      <Note $x={987} $y={459}>2、选择</Note>
      <Note $x={1494} $y={450}>3、点击Next</Note>
    </Window>
  );
}
